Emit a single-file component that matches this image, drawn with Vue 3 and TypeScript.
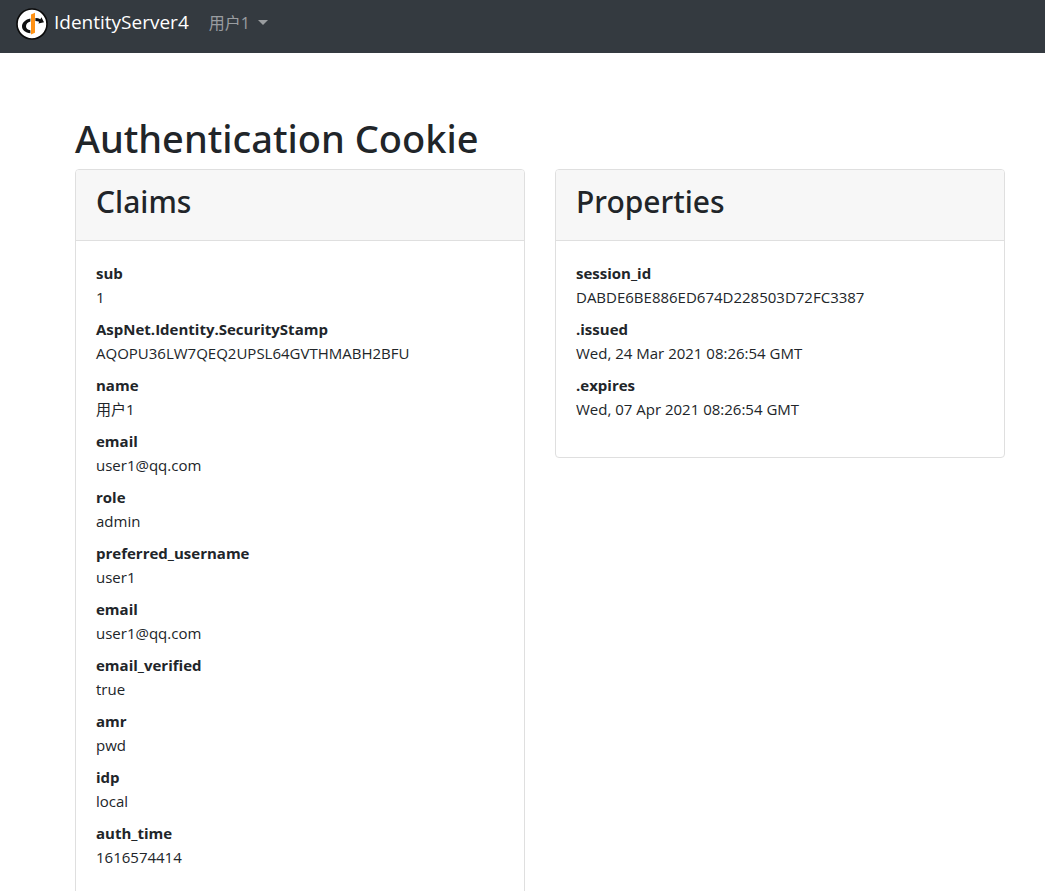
<script setup lang="ts">
interface Entry {
  key: string
  value: string
}

interface Card {
  title: string
  entries: Entry[]
}

const userName = '用户1'

const cards: Card[] = [
  {
    title: 'Claims',
    entries: [
      { key: 'sub', value: '1' },
      { key: 'AspNet.Identity.SecurityStamp', value: 'AQOPU36LW7QEQ2UPSL64GVTHMABH2BFU' },
      { key: 'name', value: userName },
      { key: 'email', value: 'user1@qq.com' },
      { key: 'role', value: 'admin' },
      { key: 'preferred_username', value: 'user1' },
      { key: 'email', value: 'user1@qq.com' },
      { key: 'email_verified', value: 'true' },
      { key: 'amr', value: 'pwd' },
      { key: 'idp', value: 'local' },
      { key: 'auth_time', value: '1616574414' },
    ],
  },
  {
    title: 'Properties',
    entries: [
      { key: 'session_id', value: 'DABDE6BE886ED674D228503D72FC3387' },
      { key: '.issued', value: 'Wed, 24 Mar 2021 08:26:54 GMT' },
      { key: '.expires', value: 'Wed, 07 Apr 2021 08:26:54 GMT' },
    ],
  },
]
</script>

<template>
  <div class="page">
    <nav class="navbar">
      <a class="brand" href="#">
        <svg class="logo" viewBox="0 0 32 32" aria-hidden="true">
          <circle cx="16" cy="16" r="15" fill="#fff" stroke="#0b0b0b" stroke-width="1.6" />
          <path
            d="M14.4 10.4C9.400 11.300 6 14.600 6 18.300C6 22.200 9.400 24.800 14.400 25.300V22.300C11.600 21.800 10 20.300 10 18.200C10 16 11.600 14.200 14.400 13.500Z"
            fill="#111"
          />
          <path d="M19.400 10C21.400 10.100 23 10.500 24.400 11.200L25.400 9.200L28 14.200L22.400 15.500L23.200 13.700C22 13.200 20.800 13 19.400 13Z" fill="#111" />
          <path d="M15 6.400L19 4.800V24.800L15 26.600Z" fill="#ff9113" />
        </svg>
        <span>IdentityServer4</span>
      </a>
      <button class="user-menu" type="button" aria-haspopup="true">
        <span>{{ userName }}</span>
        <span class="caret"></span>
      </button>
    </nav>

    <main class="content">
      <h1>Authentication Cookie</h1>
      <div class="cards">
        <section v-for="card in cards" :key="card.title" class="card">
          <header class="card-header">
            <h2>{{ card.title }}</h2>
          </header>
          <dl class="entries">
            <template v-for="(entry, i) in card.entries" :key="i">
              <dt>{{ entry.key }}</dt>
              <dd>{{ entry.value }}</dd>
            </template>
          </dl>
        </section>
      </div>
    </main>
  </div>
</template>

<style>
body {
  margin: 0;
  background: #fff;
}
</style>

<style scoped>
.page {
  font-family: 'Segoe UI', 'Open Sans', 'Noto Sans CJK SC', sans-serif;
  font-size: 15px;
  line-height: 24px;
  color: #212529;
}

.navbar {
  display: flex;
  align-items: center;
  gap: 20px;
  box-sizing: border-box;
  height: 53px;
  padding: 0 16px 6px;
  background: #343a40;
}

.brand {
  display: flex;
  align-items: center;
  gap: 6px;
  color: #fff;
  font-size: 19px;
  line-height: 28px;
  text-decoration: none;
}

.brand span {
  padding-bottom: 4px;
}

.logo {
  width: 32px;
  height: 32px;
}

.user-menu {
  display: flex;
  align-items: center;
  gap: 8px;
  padding: 0 0 2px;
  border: 0;
  background: none;
  color: #9a9da0;
  font: inherit;
  font-size: 16px;
}

.caret {
  border: 5px solid transparent;
  border-top-color: currentColor;
  border-bottom: 0;
}

.content {
  padding: 62px 40px 30px 75px;
}

h1,
h2 {
  margin: 0;
  font-family: 'Segoe UI', 'Noto Sans', 'Open Sans', sans-serif;
  font-weight: 500;
}

h1 {
  margin-bottom: 8px;
  font-size: 38px;
  line-height: 46px;
}

h2 {
  font-size: 30px;
  line-height: 40px;
}

.cards {
  display: grid;
  grid-template-columns: 1fr 1fr;
  align-items: start;
  gap: 30px;
}

.card {
  border: 1px solid #dfdfdf;
  border-radius: 4px;
  overflow: hidden;
}

.card-header {
  padding: 12px 20px 18px;
  border-bottom: 1px solid #dfdfdf;
  background: #f7f7f7;
}

.entries {
  margin: 0;
  padding: 20px 20px 28px;
}

dt {
  font-weight: 700;
}

dd {
  margin: 0 0 8px;
}
</style>
